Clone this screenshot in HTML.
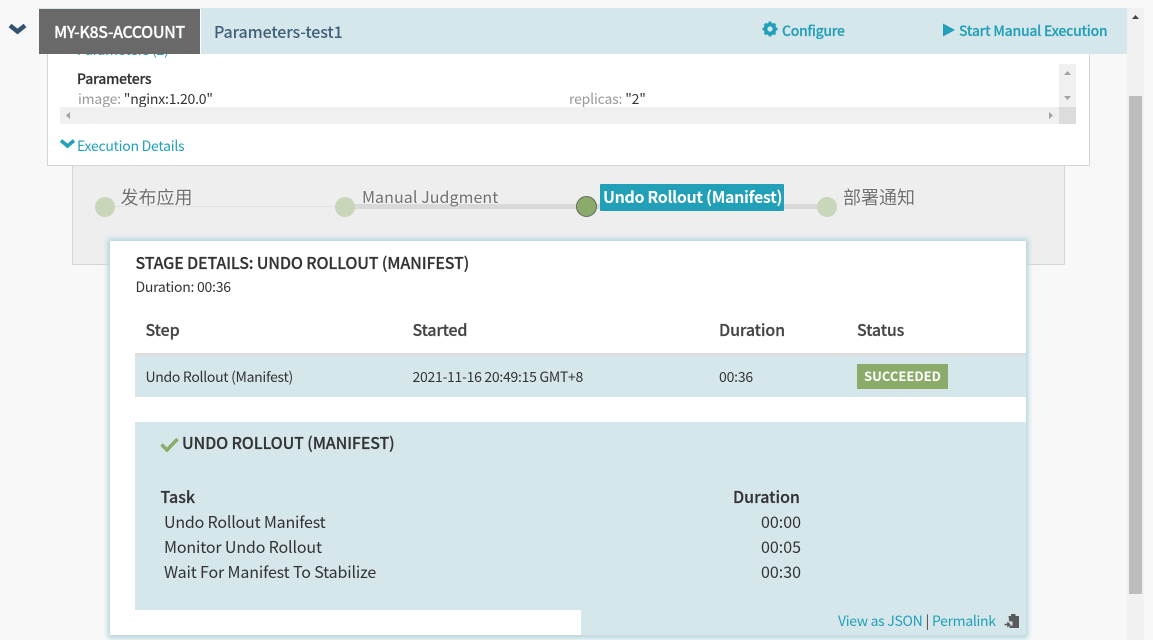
<!DOCTYPE html>
<html><head><meta charset="utf-8">
<style>
html,body{margin:0;padding:0;width:1153px;height:640px;overflow:hidden;background:#f8f8f8}
body{position:relative;font-family:"Noto Sans CJK SC","Liberation Sans",sans-serif;color:#333}
div,a{position:absolute}
.t{position:absolute;white-space:nowrap;line-height:20px;height:20px}
.m{font-weight:500;-webkit-text-stroke:.2px currentColor}
svg{position:absolute;overflow:visible}
.link{color:#22a0b8}
</style></head><body>
<!-- page scrollbar -->
<div style="left:1127px;top:8px;width:17px;height:632px;background:#f1f1f1"></div>
<div style="left:1129px;top:96px;width:13px;height:498px;background:#bdbdbd"></div>
<svg style="left:0;top:0" width="1153" height="640"><path d="M1132 19 L1135.500 15 L1139 19Z" fill="#444"/></svg>

<!-- graph panel -->
<div style="left:72px;top:165px;width:991px;height:98px;background:#eee;border:1px solid #d5d5d5"></div>
<div style="left:115px;top:206px;width:230px;height:1px;background:#e2e2e2"></div>
<div style="left:345px;top:204px;width:482px;height:5px;background:#d8d8d8"></div>
<div style="left:95px;top:197px;width:20px;height:20px;border-radius:50%;background:#c8d6b9"></div>
<div style="left:335px;top:197px;width:20px;height:20px;border-radius:50%;background:#c8d6b9"></div>
<div style="left:576px;top:196px;width:19px;height:19px;border-radius:50%;background:#8bab6b;border:1px solid #5f6b5f"></div>
<div style="left:817px;top:197px;width:20px;height:20px;border-radius:50%;background:#c8d6b9"></div>
<span class="t" style="left:120.500px;top:187px;font-size:18px;color:#707070;text-shadow:0 0 2px #fff">发布应用</span>
<span class="t" style="left:362px;top:186px;font-size:16px;letter-spacing:.07px;color:#707070;text-shadow:0 0 2px #fff">Manual Judgment</span>
<div style="left:600px;top:184px;width:184px;height:27px;background:#22a0b8;border-radius:1px"></div>
<span class="t" style="left:603px;top:186px;font-size:16px;font-weight:700;letter-spacing:-.35px;color:#fff">Undo Rollout (Manifest)</span>
<span class="t" style="left:843px;top:187px;font-size:18px;color:#707070;text-shadow:0 0 2px #fff">部署通知</span>

<!-- header -->
<svg style="left:0;top:0" width="40" height="40"><path d="M10 25.500 L17.500 31.500 L25 25.500" fill="none" stroke="#33536e" stroke-width="4.500"/></svg>
<div style="left:39px;top:8px;width:1088px;height:46px;background:#d6e7ec"></div>
<div style="left:39px;top:9px;width:161px;height:45px;background:#696969"></div>
<div style="left:200px;top:9px;width:1px;height:45px;background:#fff"></div>
<span class="t m" style="left:54px;top:21px;font-size:16px;letter-spacing:-.42px;color:#fff">MY-K8S-ACCOUNT</span>
<span class="t" style="left:214px;top:21px;font-size:16px;letter-spacing:-.13px;color:#3f5f78;font-weight:500">Parameters-test1</span>
<svg style="left:762px;top:21px" width="16" height="16" viewBox="0 0 16 16"><circle cx="8" cy="8" r="4.700" fill="none" stroke="#22a0b8" stroke-width="3.200"/><path d="M8 .5V15.500M.5 8H15.500M2.700 2.700L13.300 13.300M13.300 2.700L2.700 13.300" stroke="#22a0b8" stroke-width="2.800"/><circle cx="8" cy="8" r="2.600" fill="#d6e7ec"/></svg>
<span class="t link m" style="left:782px;top:21px;font-size:14px;letter-spacing:-.33px">Configure</span>
<svg style="left:943px;top:23px" width="13" height="14"><path d="M0 .5 L12 7 L0 13.500Z" fill="#22a0b8"/></svg>
<span class="t link m" style="left:959px;top:21px;font-size:14px;letter-spacing:-.25px">Start Manual Execution</span>

<!-- white params panel -->
<div style="left:47px;top:54px;width:1041px;height:111px;background:#fff;border:1px solid #d5d5d5;border-top:0;overflow:hidden">
  <span class="t link" style="left:29px;top:-14px;font-size:14px;letter-spacing:-.22px">Parameters (2)</span>
  <span class="t m" style="left:29px;top:15px;font-size:14px;letter-spacing:-.2px;color:#333">Parameters</span>
  <span class="t" style="left:30px;top:35px;font-size:14px;letter-spacing:-.2px;color:#333"><span style="color:#999">image:</span> "nginx:1.20.0"</span>
  <span class="t" style="left:521px;top:35px;font-size:14px;letter-spacing:-.18px;color:#333"><span style="color:#999">replicas:</span> "2"</span>
  <div style="left:12px;top:53px;width:999px;height:17px;background:#f0f0f0"></div>
  <div style="left:1011px;top:10px;width:17px;height:43px;background:#f0f0f0"></div>
  <div style="left:1011px;top:53px;width:17px;height:17px;background:#dcdcdc"></div>
  <svg style="left:0;top:0" width="1041" height="111"><path d="M1016 21 L1019.500 17 L1023 21ZM1016 42 L1019.500 46 L1023 42Z" fill="#a3a3a3"/><path d="M22 58 L18 61.500 L22 65ZM1001 58 L1005 61.500 L1001 65Z" fill="#a3a3a3"/></svg>
  <svg style="left:12px;top:85px" width="15" height="10"><path d="M1 1.500 L7.500 7 L14 1.500" fill="none" stroke="#22a0b8" stroke-width="3.600"/></svg>
  <span class="t link" style="left:29px;top:82px;font-size:14px;letter-spacing:-.25px">Execution Details</span>
</div>

<!-- stage card -->
<div style="left:110px;top:241px;width:916px;height:394px;background:#fff;box-shadow:0 0 5px 2px #a8d4de;border-bottom:1px solid #d5d5d5"></div>
<span class="t m" style="left:135.500px;top:252px;font-size:16px;letter-spacing:-.18px;color:#333">STAGE DETAILS: UNDO ROLLOUT (MANIFEST)</span>
<span class="t" style="left:135.500px;top:277px;font-size:14px;letter-spacing:-.25px;color:#333">Duration: 00:36</span>
<span class="t m" style="left:145.500px;top:319px;font-size:16px;letter-spacing:-.1px;color:#444">Step</span>
<span class="t m" style="left:412.500px;top:319px;font-size:16px;letter-spacing:-.2px;color:#444">Started</span>
<span class="t m" style="left:719px;top:319px;font-size:16px;letter-spacing:-.12px;color:#444">Duration</span>
<span class="t m" style="left:857px;top:319px;font-size:16px;letter-spacing:-.15px;color:#444">Status</span>
<div style="left:135px;top:353px;width:891px;height:3px;background:#ddd"></div>
<div style="left:135px;top:356px;width:891px;height:41px;background:#d6e7ec"></div>
<span class="t" style="left:145.500px;top:367px;font-size:14px;letter-spacing:-.3px;color:#333">Undo Rollout (Manifest)</span>
<span class="t" style="left:412.500px;top:367px;font-size:14px;letter-spacing:-.28px;color:#333">2021-11-16 20:49:15 GMT+8</span>
<span class="t" style="left:719px;top:367px;font-size:14px;letter-spacing:-.2px;color:#333">00:36</span>
<div style="left:857px;top:364px;width:91px;height:25px;background:#8bab6b"></div>
<span class="t" style="left:864px;top:366px;font-size:13px;font-weight:700;color:#fff">SUCCEEDED</span>

<div style="left:135px;top:422px;width:891px;height:188px;background:#d6e7ec"></div>
<div style="left:581px;top:610px;width:445px;height:25px;background:#d6e7ec"></div>
<svg style="left:160px;top:437px" width="19" height="15"><path d="M1.500 7.500 L7 13 L17.500 2" fill="none" stroke="#8bab6b" stroke-width="3.500"/></svg>
<span class="t m" style="left:182px;top:432px;font-size:16px;letter-spacing:-.17px;color:#333">UNDO ROLLOUT (MANIFEST)</span>
<span class="t m" style="left:160.500px;top:486px;font-size:16px;color:#333">Task</span>
<span class="t m" style="left:733px;top:486px;font-size:16px;color:#333">Duration</span>
<span class="t" style="left:164px;top:511px;font-size:16px;letter-spacing:-.19px;color:#333">Undo Rollout Manifest</span>
<span class="t" style="left:164px;top:536px;font-size:16px;letter-spacing:-.15px;color:#333">Monitor Undo Rollout</span>
<span class="t" style="left:164px;top:561px;font-size:16px;letter-spacing:-.15px;color:#333">Wait For Manifest To Stabilize</span>
<span class="t" style="left:761px;top:511px;font-size:16px;color:#333">00:00</span>
<span class="t" style="left:761px;top:536px;font-size:16px;color:#333">00:05</span>
<span class="t" style="left:761px;top:561px;font-size:16px;color:#333">00:30</span>
<span class="t link" style="left:838px;top:611px;font-size:14px;letter-spacing:-.3px">View as JSON</span>
<span class="t" style="left:925.500px;top:611px;font-size:14px;color:#444">|</span>
<span class="t link" style="left:932px;top:611px;font-size:14px;letter-spacing:-.33px">Permalink</span>
<svg style="left:1004px;top:613px" width="16" height="16" viewBox="0 0 16 16"><path d="M4.500 3H7V1H11.500V3H15V15H5.500V12.500H8.500V8.500H5.200Z" fill="#5a5a5a"/><path d="M.5 11.500H5M3.300 9.300L5.500 11.500L3.300 13.700" fill="none" stroke="#5a5a5a" stroke-width="1.600"/></svg>
</body></html>
